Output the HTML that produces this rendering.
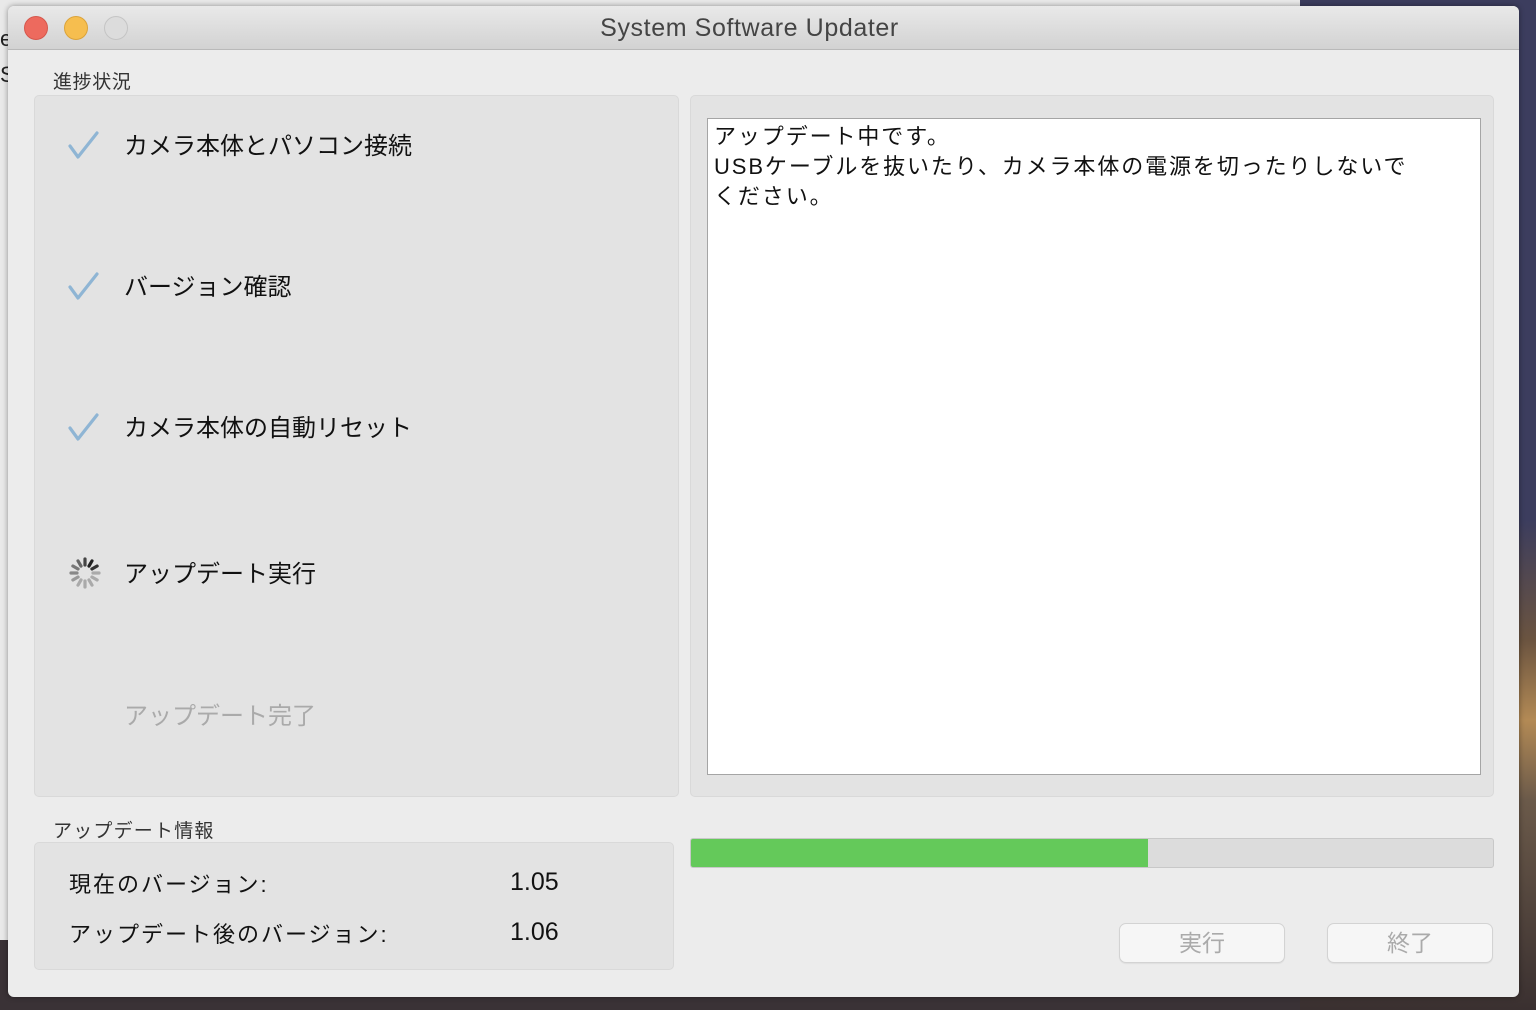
<!DOCTYPE html>
<html><head><meta charset="utf-8"><style>
*{margin:0;padding:0;box-sizing:border-box}
body{width:1536px;height:1010px;position:relative;overflow:hidden;font-family:"Liberation Sans","Noto Sans CJK JP",sans-serif;background:#3a3236}
.abs{position:absolute}
#rightbg{left:1300px;top:0;width:236px;height:1010px;background:linear-gradient(#3c3d5e 0,#3c3d5e 520px,#6b5440 640px,#b38a55 720px,#6b5a4a 800px,#3a3030 1010px)}
#leftwin{left:0;top:0;width:1305px;height:940px;background:#e9e9e9;border-right:1px solid #ccc}
#win{left:8px;top:6px;width:1511px;height:991px;background:#ececec;border-radius:6px;overflow:hidden;box-shadow:0 0 6px rgba(0,0,0,.4)}
#title{left:0;top:0;width:1511px;height:44px;background:linear-gradient(#e9e9e9,#d2d2d2);border-bottom:1px solid #b9b9b9;text-align:center;font-size:25px;letter-spacing:0.6px;line-height:44px;color:#444;padding-right:28px}
.tl{top:10px;width:24px;height:24px;border-radius:50%}
.box{background:#e3e3e3;border:1px solid #d9d9d9;border-radius:5px}
.lbl{font-size:19px;color:#333}
.item{font-size:24px;color:#111;left:116px}
.btn{top:917px;width:166px;height:40px;background:#f6f6f6;border:1px solid #d3d3d3;border-radius:7px;text-align:center;line-height:38px;font-size:23px;color:#aaa;box-shadow:0 1px 1px rgba(0,0,0,.06)}
</style></head><body>
<div id="leftwin" class="abs"></div>
<div id="rightbg" class="abs"></div>
<div class="abs" style="left:0;top:26px;font-size:22px;color:#222">e</div>
<div class="abs" style="left:0;top:62px;font-size:22px;color:#222">Se</div>
<div id="win" class="abs">
 <div id="title" class="abs">System Software Updater</div>
 <div class="abs tl" style="left:16px;background:#ed6a5e;border:1px solid #d5574c"></div>
 <div class="abs tl" style="left:56px;background:#f6be4f;border:1px solid #dba33a"></div>
 <div class="abs tl" style="left:96px;background:#dcdcdc;border:1px solid #c4c4c4"></div>

 <div class="abs lbl" style="left:45px;top:61px;letter-spacing:0.6px">進捗状況</div>
 <div class="abs box" style="left:26px;top:89px;width:645px;height:702px"></div>
 <svg class="abs" style="left:60px;top:124px" width="34" height="34"><path d="M2 16 L10 27 L29 3" fill="none" stroke="#8fb5d4" stroke-width="3.2" stroke-linecap="round" stroke-linejoin="round"/></svg>
 <div class="abs item" style="top:120px">カメラ本体とパソコン接続</div>
 <svg class="abs" style="left:60px;top:265px" width="34" height="34"><path d="M2 16 L10 27 L29 3" fill="none" stroke="#8fb5d4" stroke-width="3.2" stroke-linecap="round" stroke-linejoin="round"/></svg>
 <div class="abs item" style="top:261px">バージョン確認</div>
 <svg class="abs" style="left:60px;top:406px" width="34" height="34"><path d="M2 16 L10 27 L29 3" fill="none" stroke="#8fb5d4" stroke-width="3.2" stroke-linecap="round" stroke-linejoin="round"/></svg>
 <div class="abs item" style="top:402px">カメラ本体の自動リセット</div>
 <svg class="abs" style="left:60px;top:550px" width="34" height="34" viewBox="-17 -17 34 34">
  <g stroke-width="3.2" stroke-linecap="round">
   <line x1="0" y1="-8" x2="0" y2="-14" stroke="#444" transform="rotate(0)"/>
   <line x1="0" y1="-8" x2="0" y2="-14" stroke="#222" transform="rotate(30)"/>
   <line x1="0" y1="-8" x2="0" y2="-14" stroke="#333" transform="rotate(60)"/>
   <line x1="0" y1="-8" x2="0" y2="-14" stroke="#aaa" transform="rotate(90)"/>
   <line x1="0" y1="-8" x2="0" y2="-14" stroke="#aaa" transform="rotate(120)"/>
   <line x1="0" y1="-8" x2="0" y2="-14" stroke="#aaa" transform="rotate(150)"/>
   <line x1="0" y1="-8" x2="0" y2="-14" stroke="#aaa" transform="rotate(180)"/>
   <line x1="0" y1="-8" x2="0" y2="-14" stroke="#aaa" transform="rotate(210)"/>
   <line x1="0" y1="-8" x2="0" y2="-14" stroke="#999" transform="rotate(240)"/>
   <line x1="0" y1="-8" x2="0" y2="-14" stroke="#888" transform="rotate(270)"/>
   <line x1="0" y1="-8" x2="0" y2="-14" stroke="#777" transform="rotate(300)"/>
   <line x1="0" y1="-8" x2="0" y2="-14" stroke="#666" transform="rotate(330)"/>
  </g></svg>
 <div class="abs item" style="top:548px">アップデート実行</div>
 <div class="abs item" style="top:690px;color:#aaa">アップデート完了</div>

 <div class="abs box" style="left:682px;top:89px;width:804px;height:702px"></div>
 <div class="abs" style="left:699px;top:112px;width:774px;height:657px;background:#fff;border:1px solid #a5a5a5;padding:3px 6px;font-size:22px;letter-spacing:1.9px;line-height:30px;color:#111">アップデート中です。<br>USBケーブルを抜いたり、カメラ本体の電源を切ったりしないで<br>ください。</div>

 <div class="abs lbl" style="left:45px;top:810px;letter-spacing:1.2px">アップデート情報</div>
 <div class="abs box" style="left:26px;top:836px;width:640px;height:128px"></div>
 <div class="abs" style="left:61px;top:861px;font-size:22px;letter-spacing:2px;color:#111">現在のバージョン:</div>
 <div class="abs" style="left:502px;top:862px;font-size:25px;color:#111">1.05</div>
 <div class="abs" style="left:61px;top:911px;font-size:22px;letter-spacing:2px;color:#111">アップデート後のバージョン:</div>
 <div class="abs" style="left:502px;top:912px;font-size:25px;color:#111">1.06</div>

 <div class="abs" style="left:682px;top:832px;width:804px;height:30px;background:#dcdcdc;border:1px solid #c8c8c8;border-radius:3px;overflow:hidden"><div style="width:457px;height:100%;background:#64c95a"></div></div>
 <div class="abs btn" style="left:1111px">実行</div>
 <div class="abs btn" style="left:1319px">終了</div>
</div>
</body></html>
